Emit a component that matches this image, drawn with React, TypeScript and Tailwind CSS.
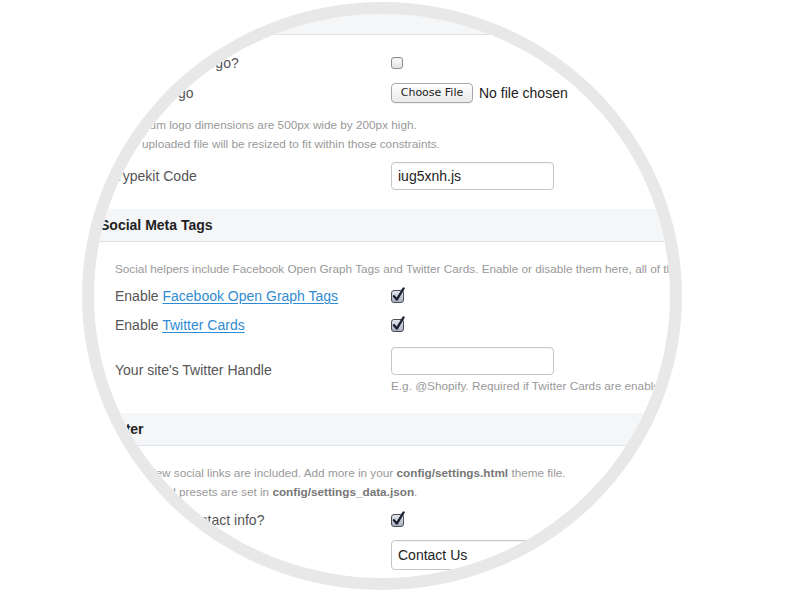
import type { ReactNode } from "react";

// Settings page seen through a round "magnifier": the form is clipped to
// an ellipse and a grey ring is laid over the edge.

const labelCls = "w-[276px] shrink-0 text-[14px] text-[#555]";
const helpCls = "text-[11.75px] leading-[19px] text-[#999]";

function Checkbox({ checked }: { checked?: boolean }) {
  if (!checked) {
    return (
      <span className="block size-[12px] rounded-[3px] border border-[#8d8d8d] bg-gradient-to-b from-white to-[#e2e2e2] shadow-[inset_0_1px_1px_rgba(0,0,0,0.08)]" />
    );
  }
  return (
    <svg width="15" height="16" viewBox="0 0 15 16" className="-mt-[3px]">
      <defs>
        <linearGradient id="cbg" x1="0" y1="0" x2="0" y2="1">
          <stop offset="0" stopColor="#e4e7ee" />
          <stop offset="1" stopColor="#a8afbf" />
        </linearGradient>
      </defs>
      <rect x="0.5" y="3.5" width="12" height="12" rx="2.5" fill="url(#cbg)" stroke="#4c4f58" />
      <path d="M3 9.2 L5.8 12.6 L12.6 1.4" fill="none" stroke="#1b2133" strokeWidth="2.3" strokeLinecap="round" strokeLinejoin="round" />
    </svg>
  );
}

function TextInput({ value = "", w = "w-[163px]", h = "h-[28px]" }: { value?: string; w?: string; h?: string }) {
  return (
    <div
      className={`${w} ${h} flex items-center rounded-[4px] border border-[#c6c6c6] bg-white px-[6px] text-[14px] text-[#222] shadow-[inset_0_1px_1px_rgba(0,0,0,0.04)]`}
    >
      {value}
    </div>
  );
}

function Row({ label, className = "", children }: { label?: ReactNode; className?: string; children: ReactNode }) {
  return (
    <div className={`flex items-center ${className}`}>
      <div className={labelCls}>{label}</div>
      <div className="flex items-center">{children}</div>
    </div>
  );
}

function SectionHead({ title }: { title: string }) {
  return (
    <div className="flex h-[33px] items-center border-b border-[#dde3e9] bg-[#f5f6f7] pl-[100px] text-[14px] font-bold text-[#222]">
      {title}
    </div>
  );
}

function Link({ children }: { children: ReactNode }) {
  return <span className="text-[#2f8bd2] underline underline-offset-2">{children}</span>;
}

export default function App() {
  return (
    <div className="relative h-[600px] w-[805px] overflow-hidden bg-white font-['Liberation_Sans',Arial,sans-serif]">
      <div className="h-full w-full [clip-path:ellipse(288px_282px_at_382px_296px)]">
        {/* top of the theme section */}
        <div className="h-[35px] border-b border-[#dde3e9] bg-[#f5f6f7]" />

        <div className="pl-[115px] pt-[13px] pb-[19px]">
          <Row label="Use a custom logo?" className="h-[30px]">
            <Checkbox />
          </Row>
          <Row label="Custom logo" className="h-[30px]">
            <span className="flex h-[20px] w-[82px] items-center justify-center rounded-[4px] border border-[#a6a6a6] bg-gradient-to-b from-white to-[#e9e9e9] font-['DejaVu_Sans',sans-serif] text-[11px] text-[#222] shadow-[0_1px_0_rgba(0,0,0,0.05)]">
              Choose File
            </span>
            <span className="ml-[6px] text-[14px] text-[#222]">No file chosen</span>
          </Row>
          <div className={`mt-[7px] ${helpCls}`}>
            <div>Maximum logo dimensions are 500px wide by 200px high.</div>
            <div>Your uploaded file will be resized to fit within those constraints.</div>
          </div>
          <Row label="Typekit Code" className="mt-[9px] h-[28px]">
            <TextInput value="iug5xnh.js" />
          </Row>
        </div>

        <SectionHead title="Social Meta Tags" />
        <div className="pl-[115px] pt-[17px] pb-[19px]">
          <div className={`${helpCls} whitespace-nowrap`}>
            Social helpers include Facebook Open Graph Tags and Twitter Cards. Enable or disable them here, all of them are on by default.
          </div>
          <Row
            label={
              <>
                Enable <Link>Facebook Open Graph Tags</Link>
              </>
            }
            className="mt-[4px] h-[29px]"
          >
            <Checkbox checked />
          </Row>
          <Row
            label={
              <>
                Enable <Link>Twitter Cards</Link>
              </>
            }
            className="h-[29px]"
          >
            <Checkbox checked />
          </Row>
          <div className="mt-[7px] flex items-center">
            <div className={labelCls}>Your site's Twitter Handle</div>
            <div>
              <TextInput />
              <div className="mt-[3px] whitespace-nowrap text-[11.75px] leading-[16px] text-[#999]">
                E.g. @Shopify. Required if Twitter Cards are enabled.
              </div>
            </div>
          </div>
        </div>

        <SectionHead title="Footer" />
        <div className="pl-[115px] pt-[17px]">
          <div className={`${helpCls} whitespace-nowrap`}>
            <div>
              Only a few social links are included. Add more in your{" "}
              <b className="text-[#777]">config/settings.html</b> theme file.
            </div>
            <div>
              Their linked presets are set in <b className="text-[#777]">config/settings_data.json</b>.
            </div>
          </div>
          <Row label="Show your contact info?" className="mt-[5px] h-[28px]">
            <Checkbox checked />
          </Row>
          <Row className="mt-[6px]">
            <TextInput value="Contact Us" w="w-[320px]" h="h-[30px]" />
          </Row>
          <Row className="mt-[8px]">
            <TextInput value="" w="w-[320px]" h="h-[30px]" />
          </Row>
        </div>
      </div>

      {/* magnifier ring */}
      <div className="pointer-events-none absolute left-[82px] top-[2px] h-[588px] w-[600px] rounded-[50%] border-[12px] border-[#e8e8e8]" />
    </div>
  );
}
